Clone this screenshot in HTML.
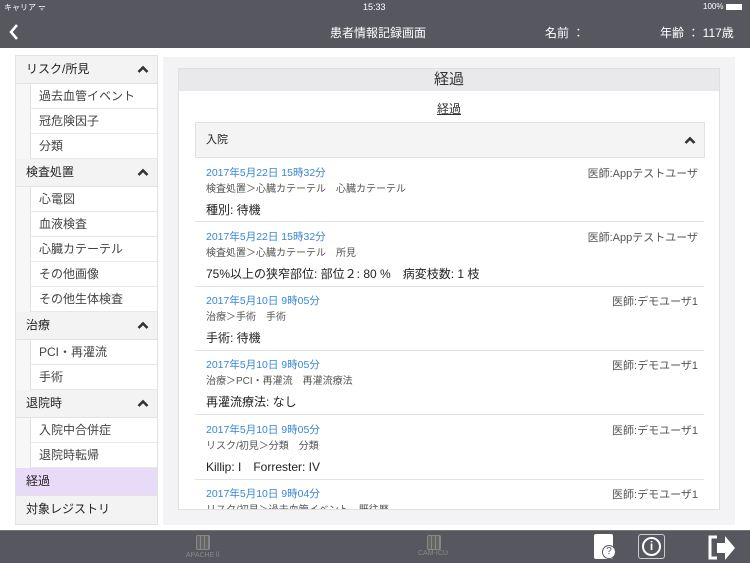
<!DOCTYPE html>
<html><head><meta charset="utf-8"><style>
*{margin:0;padding:0;box-sizing:border-box}
body{width:750px;height:563px;overflow:hidden;background:#fff;font-family:"Liberation Sans","Noto Sans CJK JP",sans-serif;position:relative;color:#222}
.top{position:absolute;left:0;top:0;width:750px;height:48px;background:#57575f;color:#fff}
.abs{position:absolute}
.side{position:absolute;left:15px;top:55px;width:143px;border:1px solid #e2e2e2;background:#f7f7f7}
.h{height:28px;background:#f3f3f3;border-bottom:1px solid #e2e2e2;font-size:12px;padding-left:10px;line-height:27px;position:relative}
.h svg{position:absolute;right:8px;top:9px}
.i{height:25px;margin-left:14px;background:#fff;border-bottom:1px solid #e8e8e8;border-left:1px solid #e2e2e2;font-size:12px;padding-left:8px;line-height:24px;color:#444}
.main{position:absolute;left:163px;top:57px;width:572px;height:468px;background:#f3f3f5}
.card{position:absolute;left:15px;top:11px;width:542px;height:442px;background:#fff;border:1px solid #e0e0e0;overflow:hidden}
.ttl{height:22px;background:#e9e9eb;text-align:center;font-size:15px;line-height:22px;color:#333}
.e{position:absolute;left:27px;width:492px;font-size:10.5px}
.d{color:#3a86d4}
.p{color:#555;margin-top:0px;font-size:10px}
.t{font-size:12px;position:absolute;left:0}
.r{position:absolute;right:0;top:0;color:#555;font-size:11px}
.sep{position:absolute;left:16px;width:509px;height:1px;background:#e2e2e2}
.bot{position:absolute;left:0;top:530px;width:750px;height:33px;background:#57575f;border-top:1px solid #777}
</style></head><body>
<div class="top">
<div class="abs" style="left:4px;top:2px;font-size:8px">キャリア ᯤ</div>
<div class="abs" style="left:363px;top:2px;font-size:9px">15:33</div>
<div class="abs" style="left:703px;top:2px;font-size:8px">100% <span style="display:inline-block;width:16px;height:6px;background:#fff;vertical-align:middle"></span></div>
<svg class="abs" style="left:8px;top:23px" width="12" height="18"><path d="M9 2L3 9l6 7" stroke="#fff" stroke-width="2.5" fill="none"/></svg>
<div class="abs" style="left:330px;top:24px;font-size:12px">患者情報記録画面</div>
<div class="abs" style="left:545px;top:24px;font-size:12px">名前 ：</div>
<div class="abs" style="left:660px;top:24px;font-size:12px">年齢 ： 117歳</div>
</div>
<div class="side">
<div class="h">リスク/所見<svg width="12" height="8"><path d="M1.5 7L6 2.5 10.5 7" stroke="#333" stroke-width="2.6" fill="none"/></svg></div>
<div class="i">過去血管イベント</div><div class="i">冠危険因子</div><div class="i">分類</div>
<div class="h">検査処置<svg width="12" height="8"><path d="M1.5 7L6 2.5 10.5 7" stroke="#333" stroke-width="2.6" fill="none"/></svg></div>
<div class="i">心電図</div><div class="i">血液検査</div><div class="i">心臓カテーテル</div><div class="i">その他画像</div><div class="i">その他生体検査</div>
<div class="h">治療<svg width="12" height="8"><path d="M1.5 7L6 2.5 10.5 7" stroke="#333" stroke-width="2.6" fill="none"/></svg></div>
<div class="i">PCI・再灌流</div><div class="i">手術</div>
<div class="h">退院時<svg width="12" height="8"><path d="M1.5 7L6 2.5 10.5 7" stroke="#333" stroke-width="2.6" fill="none"/></svg></div>
<div class="i">入院中合併症</div><div class="i">退院時転帰</div>
<div class="h" style="background:#e8dbf8">経過</div>
<div class="h" style="border-bottom:0">対象レジストリ</div>
</div>
<div class="main"><div class="card">
<div class="ttl">経過</div>
<div class="abs" style="left:0;width:540px;top:31px;text-align:center;font-size:12px;text-decoration:underline;color:#333">経過</div>
<div class="abs" style="left:16px;top:53px;width:510px;height:36px;background:#f4f4f5;border:1px solid #e2e2e2;font-size:11px;line-height:34px;padding-left:10px">入院<svg style="position:absolute;right:8px;top:13px" width="12" height="8"><path d="M1.5 7L6 2.5 10.5 7" stroke="#333" stroke-width="2.6" fill="none"/></svg></div>

<div class="e" style="top:96px"><div class="d">2017年5月22日 15時32分</div><div class="p">検査処置＞心臓カテーテル　心臓カテーテル</div><div class="r">医師:Appテストユーザ</div><div class="t" style="top:36px">種別: 待機</div></div>
<div class="sep" style="top:152px"></div>
<div class="e" style="top:160px"><div class="d">2017年5月22日 15時32分</div><div class="p">検査処置＞心臓カテーテル　所見</div><div class="r">医師:Appテストユーザ</div><div class="t" style="top:36px">75%以上の狭窄部位: 部位２: 80 %　病変枝数: 1 枝</div></div>
<div class="sep" style="top:217px"></div>
<div class="e" style="top:224px"><div class="d">2017年5月10日 9時05分</div><div class="p">治療＞手術　手術</div><div class="r">医師:デモユーザ1</div><div class="t" style="top:36px">手術: 待機</div></div>
<div class="sep" style="top:281px"></div>
<div class="e" style="top:288px"><div class="d">2017年5月10日 9時05分</div><div class="p">治療＞PCI・再灌流　再灌流療法</div><div class="r">医師:デモユーザ1</div><div class="t" style="top:36px">再灌流療法: なし</div></div>
<div class="sep" style="top:345px"></div>
<div class="e" style="top:353px"><div class="d">2017年5月10日 9時05分</div><div class="p">リスク/初見＞分類　分類</div><div class="r">医師:デモユーザ1</div><div class="t" style="top:36px">Killip: I　Forrester: IV</div></div>
<div class="sep" style="top:410px"></div>
<div class="e" style="top:417px"><div class="d">2017年5月10日 9時04分</div><div class="p">リスク/初見＞過去血管イベント　既往歴</div><div class="r">医師:デモユーザ1</div></div>
</div></div>
<div class="bot">
<div class="abs" style="left:196px;top:4px;width:14px;height:15px;border:1px solid #888;border-radius:2px;background:repeating-linear-gradient(90deg,#666 0 3px,#888 3px 4px)"></div>
<div class="abs" style="left:186px;top:19px;font-size:7px;color:#888">APACHEⅡ</div>
<div class="abs" style="left:427px;top:4px;width:14px;height:15px;border:1px solid #888;border-radius:2px;background:repeating-linear-gradient(90deg,#666 0 3px,#888 3px 4px)"></div>
<div class="abs" style="left:418px;top:19px;font-size:7px;color:#888">CAM-ICU</div>
<div class="abs" style="left:594px;top:3px;width:19px;height:25px;background:#fff;border-radius:2px"></div>
<div class="abs" style="left:602px;top:14px;width:14px;height:14px;border-radius:50%;background:#fff;border:1px solid #57575f;font-size:10px;text-align:center;line-height:12px;color:#57575f">?</div>
<div class="abs" style="left:638px;top:3px;width:27px;height:25px;border:1.5px solid #ccc;border-radius:3px"></div>
<div class="abs" style="left:642px;top:6px;width:19px;height:19px;border-radius:50%;border:2px solid #fff;color:#fff;font-size:12px;font-weight:bold;text-align:center;line-height:15px">i</div>
<svg class="abs" style="left:707px;top:3px" width="30" height="28"><path d="M10 3H3v21h7" stroke="#fff" stroke-width="3" fill="none"/><path d="M10 9h8V2l10 12-10 12v-7h-8z" fill="#fff"/></svg>
</div>
</body></html>
